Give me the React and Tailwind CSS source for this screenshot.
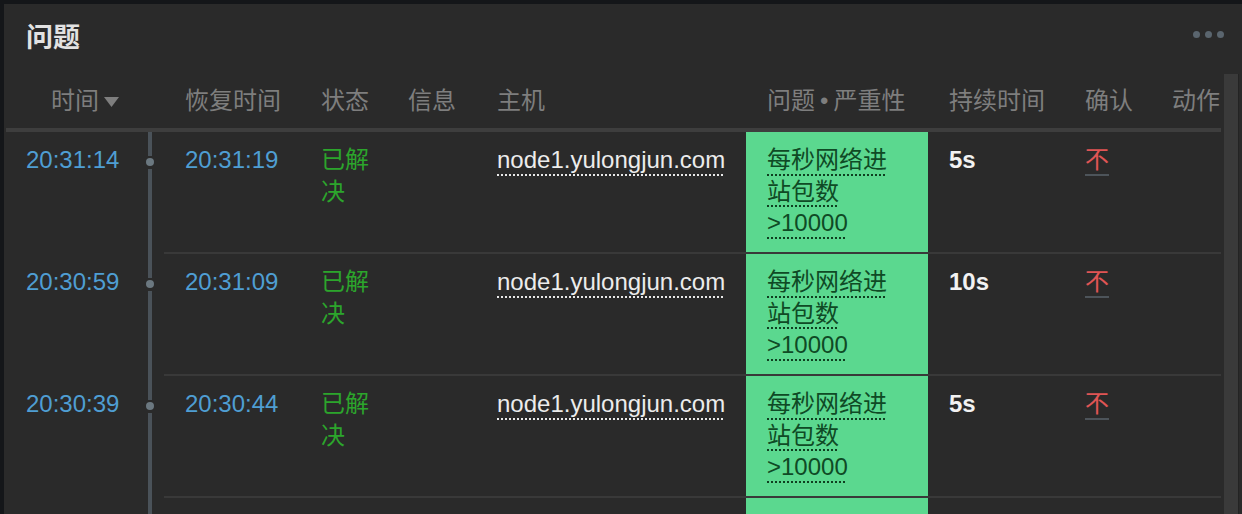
import React from "react";

const rows = [
  { t: "20:31:14", r: "20:31:19", d: "5s" },
  { t: "20:30:59", r: "20:31:09", d: "10s" },
  { t: "20:30:39", r: "20:30:44", d: "5s" },
  { empty: true },
];

function Row({ t, r, d, empty }) {
  return (
    <div className="flex h-[122px] shrink-0">
      <div className="w-[130px] shrink-0 pl-[20px] pt-[12px] text-[#4f9ed3]">{t}</div>
      <div className="w-[28px] shrink-0 flex flex-col items-center">
        <div className="w-[4px] h-[24px] bg-[#4a5259]" />
        <div className="w-[8px] h-[8px] rounded-full bg-[#6b7880] mt-[2px] mb-[3px]" />
        <div className="w-[4px] flex-1 bg-[#4a5259]" />
      </div>
      <div className="flex flex-1 border-b-2 border-[#393939]">
        <div className="w-[136px] shrink-0 pl-[21px] pt-[12px] text-[#4f9ed3]">{r}</div>
        <div className="w-[87px] shrink-0 pl-[21px] pr-[8px] pt-[12px] text-[#2ca52c]">{empty ? null : "已解决"}</div>
        <div className="w-[89px] shrink-0" />
        <div className="w-[270px] shrink-0 pl-[21px] pt-[12px] whitespace-nowrap">
          {empty ? null : (
            <span className="text-[#ececec] underline decoration-dotted decoration-2 decoration-[#e8e8e8] underline-offset-[6px]">
              node1.yulongjun.com
            </span>
          )}
        </div>
        <div className="w-[182px] shrink-0 bg-[#5bd88f] pl-[21px] pr-[21px] pt-[12px] text-[#0f4a25]">
          {empty ? null : (
            <span className="underline decoration-dotted decoration-2 decoration-[#0f3f20] underline-offset-[6px]">
              每秒网络进站包数&gt;10000
            </span>
          )}
        </div>
        <div className="w-[136px] shrink-0 pl-[21px] pt-[12px] font-bold text-[#f2f2f2]">{d}</div>
        <div className="w-[87px] shrink-0 pl-[21px] pt-[12px]">
          {empty ? null : (
            <span className="text-[#e05555] underline decoration-solid decoration-2 decoration-[#4d545a] underline-offset-[6px]">
              不
            </span>
          )}
        </div>
        <div className="w-[70px] shrink-0" />
      </div>
    </div>
  );
}

export default function App() {
  return (
    <div className="w-[1242px] h-[514px] overflow-hidden bg-[#141619] pt-[4px] pl-[4px] font-['Liberation_Sans','Noto_Sans_CJK_SC',sans-serif] text-[24px] leading-[31.5px]">
      <div className="h-full bg-[#2a2a2a] flex flex-col">
        <div className="h-[70px] shrink-0 flex justify-between items-start">
          <div className="mt-[18px] ml-[22px] text-[27px] leading-[32px] font-bold text-[#e2e2e2]">问题</div>
          <div className="mt-[27px] mr-[18px] flex gap-[5px]">
            <div className="w-[7px] h-[7px] rounded-full bg-[#5a656e]" />
            <div className="w-[7px] h-[7px] rounded-full bg-[#5a656e]" />
            <div className="w-[7px] h-[7px] rounded-full bg-[#5a656e]" />
          </div>
        </div>
        <div className="flex flex-1 min-h-0 pl-[2px]">
          <div className="w-[1215px] shrink-0 flex flex-col">
            <div className="h-[58px] shrink-0 flex items-center border-b-4 border-[#3e3e3e] text-[#7e7e7e]">
              <div className="w-[158px] shrink-0 pl-[45px] flex items-center gap-[5px]">
                <span>时间</span>
                <svg width="15" height="10" viewBox="0 0 15 10" className="mt-[2px]">
                  <polygon points="0,0 15,0 7.5,10" fill="#7e7e7e" />
                </svg>
              </div>
              <div className="w-[136px] shrink-0 pl-[21px]">恢复时间</div>
              <div className="w-[87px] shrink-0 pl-[21px]">状态</div>
              <div className="w-[89px] shrink-0 pl-[21px]">信息</div>
              <div className="w-[270px] shrink-0 pl-[21px]">主机</div>
              <div className="w-[182px] shrink-0 pl-[21px] whitespace-nowrap">
                问题<span className="mx-[5px]">•</span>严重性
              </div>
              <div className="w-[136px] shrink-0 pl-[21px]">持续时间</div>
              <div className="w-[87px] shrink-0 pl-[21px]">确认</div>
              <div className="w-[70px] shrink-0 pl-[21px]">动作</div>
            </div>
            {rows.map((row, i) => (
              <Row key={i} {...row} />
            ))}
          </div>
          <div className="w-[3px] shrink-0" />
          <div className="w-[14px] shrink-0 bg-[#3a3a3a]" />
          <div className="w-[1px] shrink-0 bg-[#232323]" />
        </div>
      </div>
    </div>
  );
}
